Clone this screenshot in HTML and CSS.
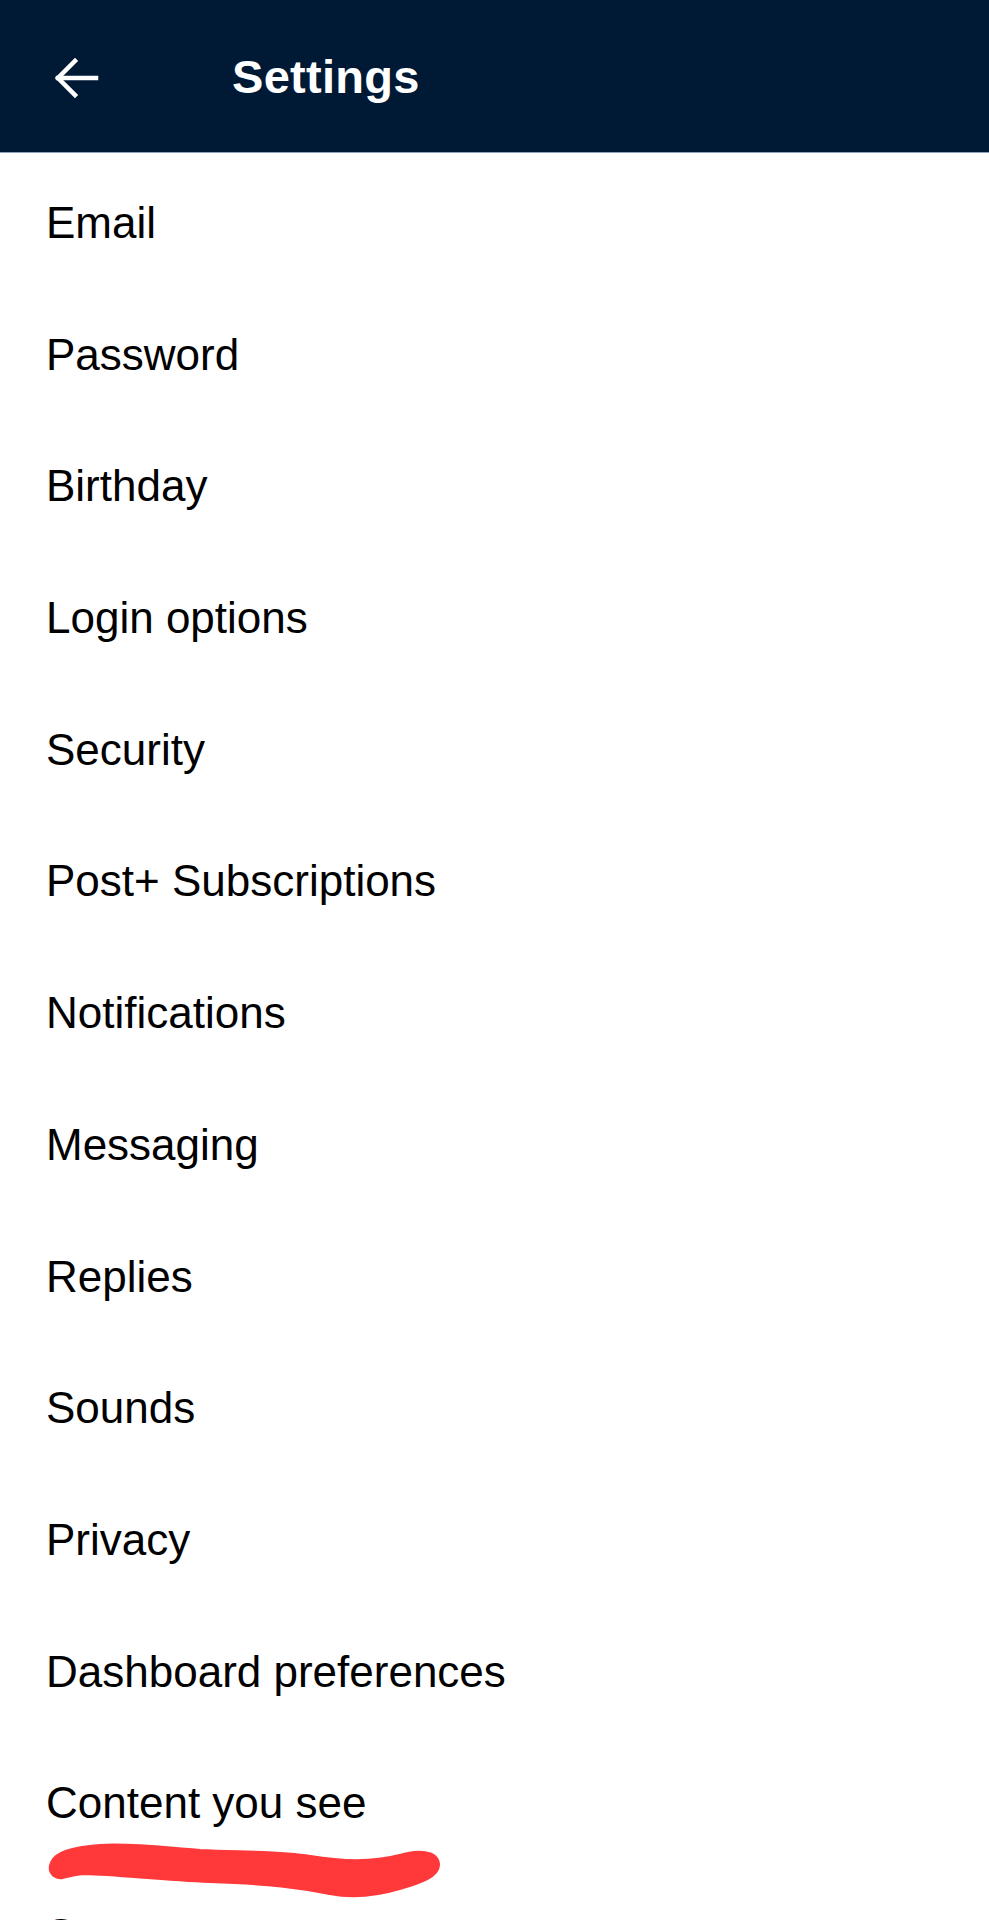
FILE: index.html
```html
<!DOCTYPE html>
<html lang="en">
<head>
  <meta charset="UTF-8">
  <title>Settings</title>
  <link rel="stylesheet" href="styles.css">
</head>
<body>
  <header class="topbar">
    <button class="back" aria-label="Back">
      <svg width="46" height="42" viewBox="0 0 46 42" fill="none" stroke="#fff" stroke-width="4.5" stroke-linecap="square" stroke-linejoin="miter">
        <path d="M4 21 H42"/>
        <path d="M21 4 L4 21 L21 38"/>
      </svg>
    </button>
    <h1 class="title">Settings</h1>
  </header>

  <ul class="settings">
    <li>Email</li>
    <li>Password</li>
    <li>Birthday</li>
    <li>Login options</li>
    <li>Security</li>
    <li>Post+ Subscriptions</li>
    <li>Notifications</li>
    <li>Messaging</li>
    <li>Replies</li>
    <li>Sounds</li>
    <li>Privacy</li>
    <li>Dashboard preferences</li>
    <li class="marked">
      Content you see
      <!-- red marker scribble drawn over the screenshot -->
      <svg class="scribble" width="480" height="80" viewBox="0 0 480 80">
        <path d="M63 26 C 66 18, 80 12, 110 10 C 140 8, 170 12, 210 15 C 250 17, 290 16, 320 21 C 350 26, 380 28, 410 20 C 428 14, 446 16, 447 27 C 448 38, 430 44, 410 50 C 390 56, 365 60, 340 55 C 310 49, 280 45, 220 43 C 170 41, 130 36, 95 35 C 80 35, 72 42, 66 38 C 61 35, 61 30, 63 26 Z" fill="#ff383a" stroke="#ff383a" stroke-width="6" stroke-linejoin="round"/>
      </svg>
    </li>
    <li>Support</li>
  </ul>
</body>
</html>
```

FILE: styles.css
```css
body {
  margin: 0;
  background: #fff;
  color: #000;
  font-family: "Liberation Sans", Arial, sans-serif;
  overflow: hidden;
  height: 1920px;
}
.topbar {
  height: 152px;
  background: #001935;
  border-bottom: 1px solid #8fa3bf;
  display: flex;
  align-items: center;
}
.back {
  background: none;
  border: none;
  padding: 0;
  margin-left: 54px;
  margin-top: 4px;
  display: flex;
  cursor: pointer;
}
.title {
  margin: 0 0 0 132px;
  color: #fff;
  font-size: 47px;
  font-weight: bold;
  letter-spacing: 0.3px;
}
.settings {
  list-style: none;
  margin: 4px 0 0;
  padding: 0;
}
.settings li {
  height: 131.7px;
  line-height: 131.7px;
  padding-left: 46px;
  font-size: 44px;
  position: relative;
}
.scribble {
  position: absolute;
  left: -10px;
  top: 100px;
}
```
